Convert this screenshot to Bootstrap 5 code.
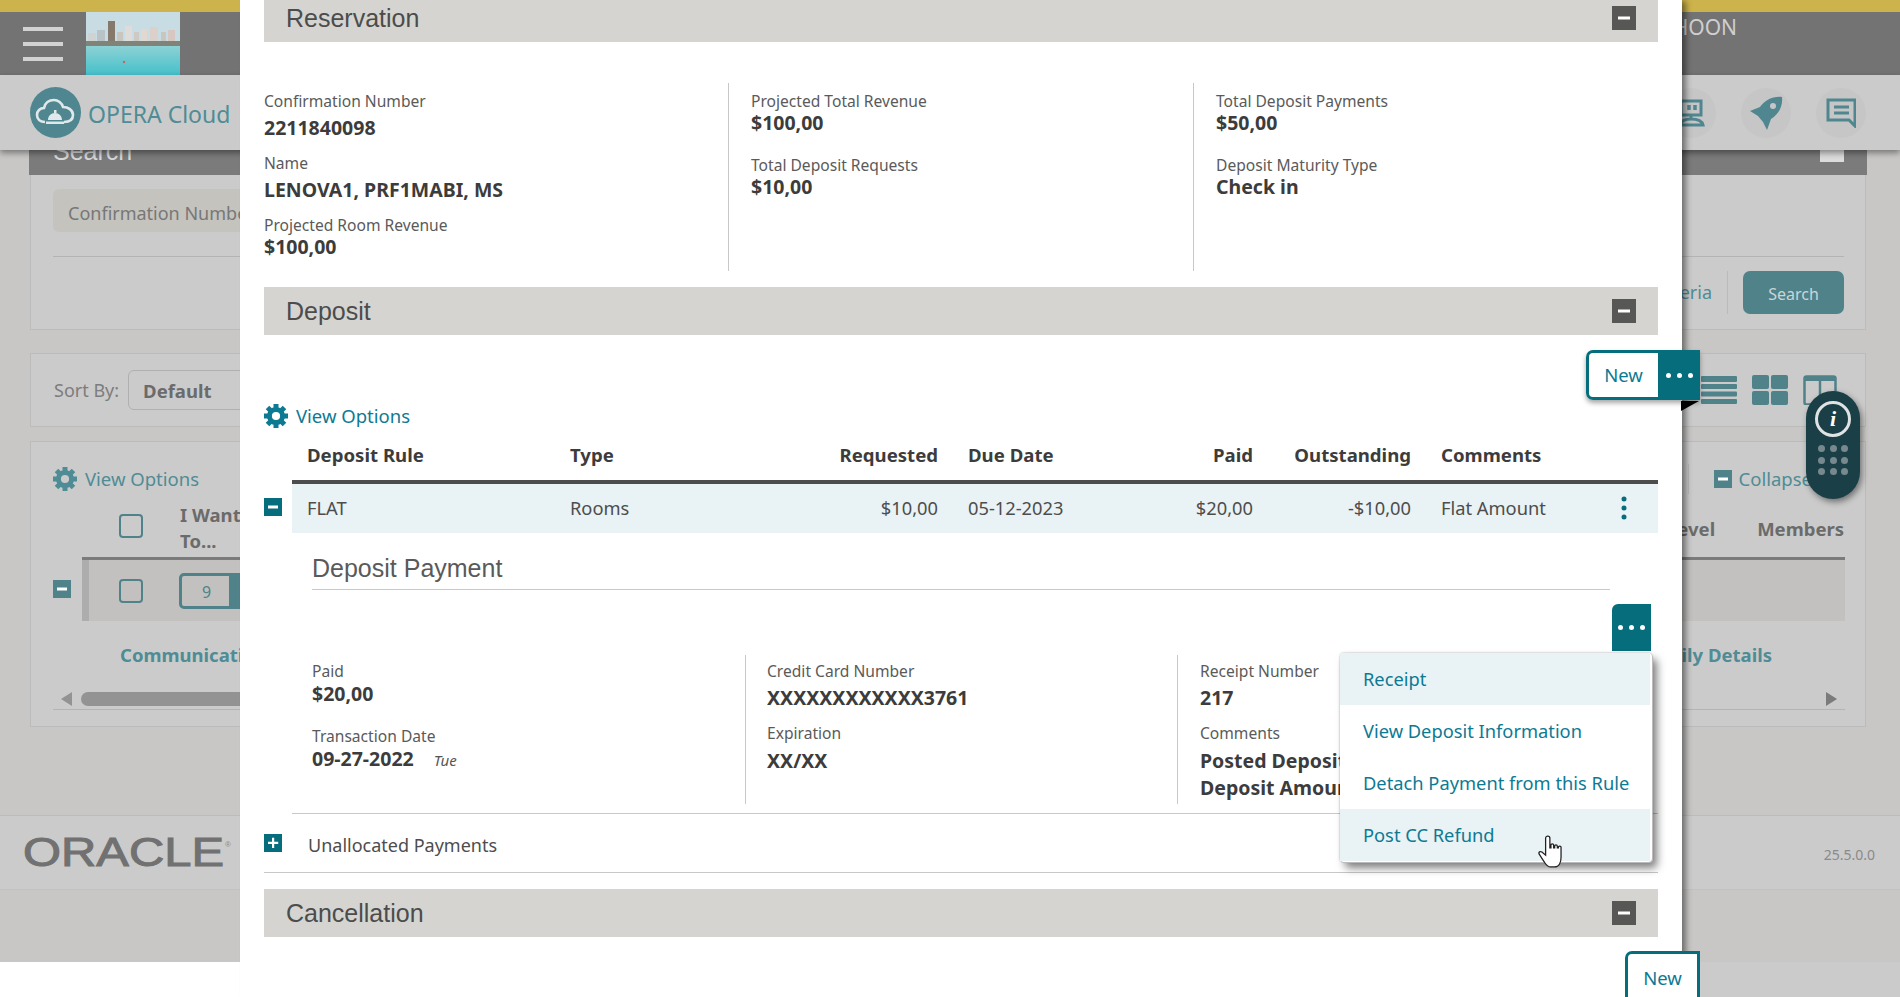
<!DOCTYPE html>
<html lang="en"><head><meta charset="utf-8"><title>OPERA Cloud</title>
<link href="https://cdn.jsdelivr.net/npm/bootstrap@5.3.0/dist/css/bootstrap.min.css" rel="stylesheet">
<style>
html,body{margin:0;height:997px;overflow:hidden;background:#fff}
body{font-family:"Noto Sans","Open Sans",sans-serif;font-size:16px;color:#474747}
.stage{position:relative;width:1900px;height:997px;overflow:hidden}
.back{height:962px;background:#c8c7c5;color:#6a6a6a}
.strip-white{width:240px;height:35px;background:#fff}
.strip-grey{height:35px;background:#cbcbcb}
.yellow{height:12px;background:#cdb34b}
.topbar{height:63px;background:#737373;padding-right:163px}
.burger{width:40px;margin-left:23px;gap:11px}
.burger i{display:block;height:4px;background:#d2d2d2}
.photo{margin-left:23px;display:block}
.hoon{font-size:21px;color:#cfcfcf;align-self:flex-start}
.navzone{height:75px;background:#cbcbcb;box-shadow:0 3px 6px rgba(0,0,0,.4);position:relative;z-index:2;padding:0 34px 0 30px}
.brand{font-size:23px;color:#4f8c95;gap:7px}
.brand span{padding-top:4px}
.round{width:50px;height:50px;border-radius:50%;background:#c6c6c6}
.rounds{gap:25px}
.main{padding:0 34px 0 30px}
.pn{border:1px solid #bbb;background:#cbcbcb}
.sbar{height:25px;background:#7b7b7b;overflow:hidden;margin:0 -1px;padding-left:24px;color:#d8d8d8;font:25px/24px "Liberation Sans",sans-serif}
.sbar span{margin-top:-11px;display:block}
.sbar b{display:block;width:24px;height:12px;background:#dcdcdc;margin-right:23px}
.pn1{height:155px;padding:14px 21px 0 22px}
.fieldish{height:43px;width:400px;background:#c4c3be;border-radius:6px;padding:0 15px;line-height:49px;font-size:18px;color:#777;overflow:hidden}
.hr1{margin-top:24px;border-top:1px solid #b4b4b4}
.act{margin-top:14px;gap:15px;font-size:18px;color:#4f8c95}
.act .sep{width:1px;height:43px;background:#bbb}
.searchbtn{width:101px;height:43px;background:#50828a;color:#c9d6d8;border-radius:7px;line-height:46px;text-align:center;font-size:16px}
.pn2{margin-top:23px;height:74px;padding:0 28px 0 23px}
.sortlbl{font-size:18px;color:#7d7d7d}
.selectish{margin-left:9px;height:40px;width:300px;border:1px solid #b0b0b0;border-radius:6px;padding-left:14px;line-height:40px;font-weight:700;font-size:18.5px;color:#6b6b6b}
.pn2 .ic{gap:15px}
.pn3{margin-top:14px;height:286px;padding:22px 20px 0 22px}
.vo{gap:8px;font-size:18.500px;line-height:24px}
.dim{color:#4f8c95}
.coll{gap:7px;font-size:18.500px;color:#4f8c95;padding-right:33px}
.coll .sep{width:1px;height:30px;background:#bbb;margin-right:18px}
.hdr3{height:44px;margin-top:8px;margin-bottom:31px;font-weight:700;font-size:18.500px;line-height:26px;color:#6b6b6b}
.cbx{width:24px;height:24px;border:2px solid #50828a;border-radius:4px;display:block}
.hdr3 .cbx{margin:12px 37px 0 66px}
.iwant{width:72px}
.hdr3 .rt{padding-top:14px;gap:42px;padding-right:1px}
.h3row{margin-top:-20px;gap:11px}
.h3box{height:64px;border-top:3px solid #7b7b7b;background:#c2c1bf;border-left:0;position:relative}
.h3in{border-left:7px solid #adadad;height:61px;padding-left:30px}
.nine{margin-left:36px;width:200px;height:36px;border:3px solid #50828a;border-right-width:150px;border-radius:5px;text-align:left;padding-left:20px;line-height:32px;color:#50828a;font-size:16px}
.lk3{margin-top:21px;font-weight:700;font-size:18.500px;color:#4f8c95;line-height:26px;padding-left:67px;padding-right:73px}
.scr{margin-top:24px;height:18px;border-bottom:1px solid #b4b4b4}
.thumb{height:14px;width:1200px;border-radius:7px;background:#939393;margin-left:9px}
.foot{margin-top:88px;height:75px;border-top:1px solid #bcbcbc;border-bottom:1px solid #c2c2c2;background:#cbcbcb;padding:0 25px 0 23px}
.ver{font-size:14px;color:#8a8a8a;padding-top:4px}
.modalish{position:absolute;left:240px;top:0;width:1442px;height:997px;background:#fff;padding:0 24px;box-shadow:5px 0 6px -1px rgba(0,0,0,.45);z-index:5}
.sect{height:48px;background:#d5d4d0;padding:0 22px;font:25px/48px "Liberation Sans",sans-serif;color:#4c4c4c}
.sect.first{height:42px;line-height:37px}
.sect.first .sq{margin-top:6px}
.sq{width:24px;height:24px;background:#575755}
.infocols{margin-top:41px;height:188px}
.cola{width:464px;padding-top:7px}
.colb{width:465px;padding:7px 0 0 22px;border-left:1px solid #c8c8c8}
.colc{flex:1;padding:7px 0 0 22px;border-left:1px solid #c8c8c8}
.lb{font-size:15.600px;line-height:22px;color:#5a5a5a;white-space:nowrap}
.vl{font-size:19.500px;line-height:24px;font-weight:700;color:#3c3c3c;white-space:nowrap}
.g4{margin-top:4px}.g3{margin-top:3px}.gn1{margin-top:-1px}.g5{margin-top:5px}
.f12{margin-bottom:12px}.f19{margin-bottom:19px}
.s2{margin-top:16px}
.newrow{margin-top:15px;margin-right:-42px}
.newgrp{position:relative;height:50px;width:114px;box-shadow:0 3px 5px rgba(0,0,0,.35);border-radius:7px 0 0 7px}
.newbtn{width:72px;border:3px solid #066d7d;border-right:0;border-radius:7px 0 0 7px;background:#fff;color:#0d7a93;font-size:18.500px;line-height:44px;text-align:center}
.morebtn{background:#066d7d;gap:6px}
.morebtn i{width:5px;height:5px;border-radius:50%;background:#fff;display:block}
.tri{position:absolute;right:1px;top:51px;width:0;height:0;border-top:10px solid #000;border-right:18px solid transparent}
.voreal{margin-top:4px;color:#0d7a93}
.smcol{width:28px;padding-top:70px;flex:none}
.deptable{width:1366px;table-layout:fixed;font-size:18.300px;margin-top:6px;border-collapse:collapse}
.deptable col:nth-child(1){width:263px}.deptable col:nth-child(2){width:235px}.deptable col:nth-child(3){width:163px}.deptable col:nth-child(4){width:147px}.deptable col:nth-child(5){width:168px}.deptable col:nth-child(6){width:158px}.deptable col:nth-child(7){width:174px}.deptable col:nth-child(8){width:58px}
.deptable th{height:48px;padding:0 15px 4px;font-weight:700;font-size:18.600px;color:#3c3c3c;vertical-align:middle;border-bottom:4px solid #4d4d4d;white-space:nowrap;line-height:24px}
.deptable td{height:51px;padding:0 15px 2px;background:#e9f2f5;vertical-align:middle;color:#4d4d4d;white-space:nowrap}
.deptable td:last-child{padding-left:21px}
.deptable td svg{display:block}
.detail{position:relative}
.dtitle{margin-left:48px;margin-right:48px;height:57px;border-bottom:1px solid #c8c8c8;font:25px/70px "Liberation Sans",sans-serif;color:#5a5a5a}
.dots2row{margin-top:14px;height:47px;margin-right:7px}
.dots2{width:39px;height:47px;background:#066d7d;border-radius:6px 0 0 0;gap:6px}
.dots2 i{width:5px;height:5px;border-radius:50%;background:#fff;display:block}
.payrow{margin-left:48px;margin-top:4px;height:149px}
.pa{width:433px;padding-top:5px}
.pb{width:432px;padding:5px 0 0 21px;border-left:1px solid #c8c8c8}
.pc{flex:1;padding:5px 0 0 22px;border-left:1px solid #c8c8c8;overflow:hidden}
.tue{font-size:15px;font-style:italic;font-weight:400;color:#555;margin-left:20px}
.rule1{margin:9px 0 0 28px;border-top:1px solid #c8c8c8}
.unal{height:59px;border-bottom:1px solid #c8c8c8;gap:26px;font-size:18px;color:#4d4d4d}
.unal span{padding-top:4px}
.newbottom{margin-top:14px;margin-right:-42px}
.newb2{width:75px;height:60px;border:3px solid #066d7d;border-radius:7px 0 0 0;background:#fff;color:#0d7a93;font-size:18.500px;text-align:center;line-height:48px}
.menu{position:absolute;left:1076px;top:120px;width:312px;height:209px;background:#fff;border-radius:4px;box-shadow:1px 1px 0 #bbb,5px 6px 9px rgba(0,0,0,.5),0 0 2px rgba(0,0,0,.35);z-index:3;padding-right:2px}
.mi{height:52px;line-height:52px;padding-left:23px;color:#0d7a93;font-size:18.300px;white-space:nowrap;position:relative}
.mi.on{background:#e9f2f5}
.hand{position:absolute;left:198px;top:26px}
.widget{position:absolute;left:1806px;top:391px;width:54px;height:108px;border-radius:27px;background:#1b3f47;box-shadow:2px 3px 6px rgba(0,0,0,.45);z-index:6;padding-top:10px}
.wi{width:36px;height:36px;border:3px solid #dfe3e3;border-radius:50%;color:#fff;font:italic 700 22px/30px "Liberation Serif",serif;text-align:center}
.dgrid{margin-top:8px;display:grid;grid-template-columns:repeat(3,7px);gap:4.5px}
.dgrid i{width:7px;height:7px;border-radius:50%;background:#77898d;display:block}
</style></head>
<body>
<svg width="0" height="0" class="d-block position-absolute"><defs>
<symbol id="gear" viewBox="0 0 24 24"><circle cx="12" cy="12" r="6.6" fill="none" stroke-width="5" stroke="currentColor"/><g stroke="currentColor" stroke-width="5"><path d="M12 0v5M12 19v5M0 12h5M19 12h5M3.5 3.5l3.6 3.6M16.9 16.9l3.6 3.6M20.5 3.5l-3.6 3.6M7.1 16.9l-3.6 3.6"/></g></symbol>
<symbol id="mn" viewBox="0 0 18 18"><rect x="4" y="7.5" width="10" height="3" fill="#fff"/></symbol>
<symbol id="pl" viewBox="0 0 18 18"><path d="M4 7.7h4V3.800h2.200V7.700h4v2.300h-4v4H8v-4H4z" fill="#fff"/></symbol>
<symbol id="mnbig" viewBox="0 0 24 24"><rect x="6" y="10.500" width="12" height="3" fill="#fff"/></symbol>
</defs></svg>
<div class="stage">
 <div class="back d-flex flex-column">
  <div class="yellow"></div>
  <div class="topbar d-flex justify-content-between">
   <div class="d-flex align-items-center">
    <div class="burger d-flex flex-column"><i></i><i></i><i></i></div>
    <svg class="photo" width="94" height="63" viewBox="0 0 94 63"><defs><linearGradient id="sea" x1="0" y1="0" x2="0" y2="1"><stop offset="0" stop-color="#8fd2d6"/><stop offset="1" stop-color="#45c0c9"/></linearGradient></defs><rect width="94" height="63" fill="#c8dde3"/><rect y="33" width="94" height="30" fill="url(#sea)"/><rect x="2" y="21" width="8" height="11" fill="#cfd3d2"/><rect x="11" y="18" width="8" height="14" fill="#b9c2c6"/><rect x="22" y="9" width="7" height="23" fill="#85796c"/><rect x="31" y="20" width="6" height="12" fill="#c9c6c0"/><rect x="39" y="14" width="7" height="18" fill="#dedbd8"/><rect x="48" y="20" width="5" height="12" fill="#cfc9c4"/><rect x="55" y="17" width="6" height="15" fill="#e2d8d0"/><rect x="64" y="15" width="8" height="17" fill="#dbd1ca"/><rect x="75" y="20" width="5" height="12" fill="#c9c6c0"/><rect x="82" y="18" width="7" height="14" fill="#d8c6c2"/><rect y="29" width="94" height="5" fill="#7f8378"/><circle cx="38" cy="50" r="1.200" fill="#c9645f"/></svg>
   </div>
   <div class="hoon">HOON</div>
  </div>
  <div class="navzone d-flex justify-content-between align-items-center">
   <div class="brand d-flex align-items-center">
    <svg width="51" height="51" viewBox="0 0 51 51"><circle cx="25.500" cy="25.500" r="25.500" fill="#50868f"/><path d="M15 35c-5 0-8-3-8-7s3-7 7-7c1-5 5-8 10-8 4 0 8 3 9 7 5 0 10 3 10 8s-4 7-9 7" fill="none" stroke="#dfe8ea" stroke-width="2.600"/><path d="M18 33c0-4 3-7 7-7s7 3 7 7zM16 34.500h18v2.500H16zM24 23h2.500v3H24z" fill="#dfe8ea"/></svg>
    <span>OPERA Cloud</span>
   </div>
   <div class="rounds d-flex">
    <div class="round d-flex align-items-center justify-content-center"><svg width="30" height="30" viewBox="0 0 30 30" fill="none" stroke="#50868f" stroke-width="3"><rect x="5" y="3" width="20" height="14"/><path d="M13 7v5M19 7v5" stroke-width="3.500"/><path d="M15 17v4M4 27c1-4 4-6 11-6s11 2 12 6z"/></svg></div>
    <div class="round d-flex align-items-center justify-content-center"><svg width="40" height="40" viewBox="0 0 40 40"><path fill-rule="evenodd" fill="#50868f" d="M36 4C27 3 19 7 14 14L4 18l8 5 5 6 4 8 4-11C33 21 37 13 36 4ZM27 10a3 3 0 1 1 0 6 3 3 0 0 1 0-6Z"/></svg></div>
    <div class="round d-flex align-items-center justify-content-center"><svg width="30" height="30" viewBox="0 0 30 30" fill="none" stroke="#50868f" stroke-width="3"><path d="M2 2h27v26l-6-6H2z"/><path d="M8 9h15M8 15h15"/></svg></div>
   </div>
  </div>
  <div class="main">
   <div class="sbar d-flex justify-content-between"><span>Search</span><b></b></div>
   <div class="pn pn1 border-top-0">
    <div class="fieldish">Confirmation Number</div>
    <div class="hr1"></div>
    <div class="act d-flex justify-content-end align-items-center"><span>Clear Criteria</span><span class="sep"></span><span class="searchbtn">Search</span></div>
   </div>
   <div class="pn pn2 d-flex justify-content-between align-items-center">
    <div class="d-flex align-items-center"><span class="sortlbl">Sort By:</span><span class="selectish">Default</span></div>
    <div class="ic d-flex">
     <svg width="36" height="30" viewBox="0 0 36 30" fill="#50828a"><rect width="36" height="6" y="1" rx="1"/><rect width="36" height="5" y="9" rx="1"/><rect width="36" height="5" y="16.500" rx="1"/><rect width="36" height="5" y="24" rx="1"/></svg>
     <svg width="36" height="30" viewBox="0 0 36 30" fill="#50828a"><rect width="17" height="14" rx="2"/><rect x="19" width="17" height="14" rx="2"/><rect y="16" width="17" height="14" rx="2"/><rect x="19" y="16" width="17" height="14" rx="2"/></svg>
     <svg width="34" height="30" viewBox="0 0 34 30" fill="none" stroke="#50828a" stroke-width="2.500"><rect x="1.500" y="1.500" width="31" height="28" rx="2"/><path d="M17 1v28"/><path d="M1 3.500h32" stroke-width="5"/></svg>
    </div>
   </div>
   <div class="pn pn3">
    <div class="d-flex justify-content-between">
     <div class="vo d-flex align-items-center dim"><svg width="24" height="24"><use href="#gear"/></svg><span>View Options</span></div>
     <div class="coll d-flex align-items-center"><span class="sep"></span><svg width="18" height="18"><rect width="18" height="18" fill="#50828a"/><use href="#mn"/></svg><span>Collapse</span></div>
    </div>
    <div class="hdr3 d-flex justify-content-between">
     <div class="d-flex"><span class="cbx"></span><div class="iwant">I Want To...</div></div>
     <div class="rt d-flex"><span>Level</span><span>Members</span></div>
    </div>
    <div class="h3row d-flex align-items-center">
     <svg width="18" height="18" class="flex-shrink-0"><rect width="18" height="18" fill="#50828a"/><use href="#mn"/></svg>
     <div class="h3box flex-grow-1"><div class="h3in d-flex align-items-center"><span class="cbx"></span><div class="nine">9</div></div></div>
    </div>
    <div class="lk3 d-flex justify-content-between"><span>Communications</span><span>Family Details</span></div>
    <div class="scr d-flex justify-content-between align-items-start">
     <div class="d-flex"><svg width="19" height="14" viewBox="0 0 19 14"><path d="M19 0v14L8 7z" fill="#939393"/></svg><div class="thumb"></div></div>
     <svg width="11" height="14" viewBox="0 0 11 14" class="me-2"><path d="M0 0v14l11-7z" fill="#7b7b7b"/></svg>
    </div>
   </div>
  </div>
  <div class="foot d-flex justify-content-between align-items-center">
   <svg width="210" height="36" viewBox="0 0 210 36"><text x="0" y="31" font-family="Liberation Sans" font-size="40" fill="#717171" stroke="#717171" stroke-width="1" textLength="201" lengthAdjust="spacingAndGlyphs">ORACLE</text><text x="202" y="12" font-family="Liberation Sans" font-size="8" fill="#8a8a8a">®</text></svg>
   <span class="ver">25.5.0.0</span>
  </div>
 </div>
 <div class="d-flex"><div class="strip-white"></div><div class="strip-grey flex-grow-1"></div></div>

 <div class="modalish">
  <div class="sect first d-flex justify-content-between"><span>Reservation</span><div class="sq"><svg width="24" height="24" class="d-block"><use href="#mnbig"/></svg></div></div>
  <div class="infocols d-flex">
   <div class="cola">
    <div class="f12"><div class="lb">Confirmation Number</div><div class="vl g4">2211840098</div></div>
    <div class="f12"><div class="lb">Name</div><div class="vl g4">LENOVA1, PRF1MABI, MS</div></div>
    <div><div class="lb">Projected Room Revenue</div><div class="vl gn1">$100,00</div></div>
   </div>
   <div class="colb">
    <div class="f19"><div class="lb">Projected Total Revenue</div><div class="vl gn1">$100,00</div></div>
    <div><div class="lb">Total Deposit Requests</div><div class="vl gn1">$10,00</div></div>
   </div>
   <div class="colc">
    <div class="f19"><div class="lb">Total Deposit Payments</div><div class="vl gn1">$50,00</div></div>
    <div><div class="lb">Deposit Maturity Type</div><div class="vl gn1">Check in</div></div>
   </div>
  </div>
  <div class="sect s2 d-flex justify-content-between align-items-center"><span>Deposit</span><div class="sq"><svg width="24" height="24" class="d-block"><use href="#mnbig"/></svg></div></div>
  <div class="newrow d-flex justify-content-end"><div class="newgrp d-flex"><div class="newbtn">New</div><div class="morebtn flex-grow-1 d-flex align-items-center justify-content-center"><i></i><i></i><i></i></div><span class="tri"></span></div></div>
  <div class="vo voreal d-flex align-items-center"><svg width="24" height="24"><use href="#gear"/></svg><span>View Options</span></div>
  <div class="d-flex">
   <div class="smcol"><svg width="18" height="18" class="d-block"><rect width="18" height="18" fill="#066d7d"/><use href="#mn"/></svg></div>
   <table class="deptable">
    <colgroup><col><col><col><col><col><col><col><col></colgroup>
    <thead><tr><th>Deposit Rule</th><th>Type</th><th class="text-end">Requested</th><th>Due Date</th><th class="text-end">Paid</th><th class="text-end">Outstanding</th><th>Comments</th><th></th></tr></thead>
    <tbody><tr><td>FLAT</td><td>Rooms</td><td class="text-end">$10,00</td><td>05-12-2023</td><td class="text-end">$20,00</td><td class="text-end">-$10,00</td><td>Flat Amount</td><td><svg width="6" height="24" viewBox="0 0 6 24" fill="#066d7d"><circle cx="3" cy="3" r="2.500"/><circle cx="3" cy="12" r="2.500"/><circle cx="3" cy="21" r="2.500"/></svg></td></tr></tbody>
   </table>
  </div>
  <div class="detail">
   <div class="dtitle">Deposit Payment</div>
   <div class="dots2row d-flex justify-content-end"><div class="dots2 d-flex align-items-center justify-content-center"><i></i><i></i><i></i></div></div>
   <div class="payrow d-flex">
    <div class="pa">
     <div class="f19"><div class="lb">Paid</div><div class="vl">$20,00</div></div>
     <div><div class="lb">Transaction Date</div><div class="vl">09-27-2022<span class="tue">Tue</span></div></div>
    </div>
    <div class="pb">
     <div class="f12"><div class="lb">Credit Card Number</div><div class="vl g4">XXXXXXXXXXXX3761</div></div>
     <div><div class="lb">Expiration</div><div class="vl g5">XX/XX</div></div>
    </div>
    <div class="pc">
     <div class="f12"><div class="lb">Receipt Number</div><div class="vl g4">217</div></div>
     <div><div class="lb">Comments</div><div class="vl g5">Posted Deposit</div><div class="vl g3">Deposit Amount</div></div>
    </div>
   </div>
   <div class="rule1"></div>
   <div class="unal d-flex align-items-center"><svg width="18" height="18"><rect width="18" height="18" fill="#066d7d"/><use href="#pl"/></svg><span>Unallocated Payments</span></div>
   <div class="menu">
    <div class="mi on">Receipt</div>
    <div class="mi">View Deposit Information</div>
    <div class="mi">Detach Payment from this Rule</div>
    <div class="mi on">Post CC Refund
     <svg class="hand" width="28" height="33" viewBox="0 0 26 31"><path d="M9 1c1.300 0 2 1 2 2v9h1V9.500c0-1.500 2.500-1.500 2.500 0V12h1v-1.500c0-1.500 2.500-1.500 2.500 0V12h1v-.5c0-1.500 2.500-1.500 2.500 0V21c0 5-2 9-6 9h-4c-3 0-4-2-6-5L1 18c-1-2 1-3 2.500-2L7 19V3c0-1 1-2 2-2Z" fill="#fff" stroke="#222" stroke-width="1.200"/></svg>
    </div>
   </div>
  </div>
  <div class="sect s2 d-flex justify-content-between align-items-center"><span>Cancellation</span><div class="sq"><svg width="24" height="24" class="d-block"><use href="#mnbig"/></svg></div></div>
  <div class="newbottom d-flex justify-content-end"><div class="newb2">New</div></div>
 </div>
 <div class="widget d-flex flex-column align-items-center">
  <div class="wi">i</div>
  <div class="dgrid"><i></i><i></i><i></i><i></i><i></i><i></i><i></i><i></i><i></i></div>
 </div>
</div>
<script src="https://cdn.jsdelivr.net/npm/bootstrap@5.3.0/dist/js/bootstrap.bundle.min.js"></script>
</body></html>
